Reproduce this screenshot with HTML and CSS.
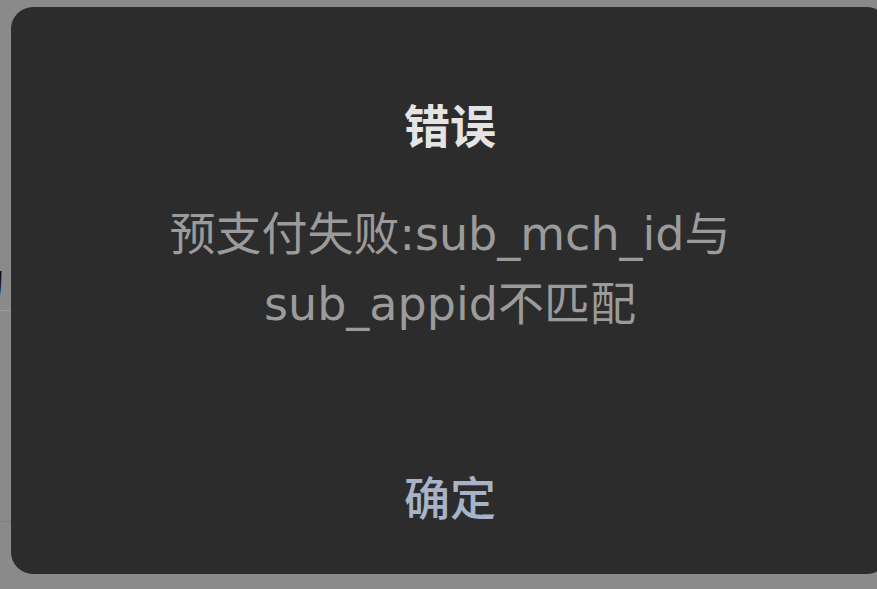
FILE: index.html
```html
<!DOCTYPE html>
<html lang="zh-CN">
<head>
  <meta charset="UTF-8">
  <title>错误</title>
  <link rel="stylesheet" href="styles.css">
</head>
<body>

  <!-- page behind the dialog, dimmed -->
  <div class="page">
    <div class="row row-top">
      <span class="row-label">的</span>
    </div>
    <div class="row row-tall"></div>
  </div>

  <!-- error dialog -->
  <div class="dialog">
    <div class="dialog-title">错误</div>
    <div class="dialog-msg">预支付失败:sub_mch_id与<br>sub_appid不匹配</div>
    <div class="dialog-btn">确定</div>
  </div>

</body>
</html>
```

FILE: styles.css
```css
body {
  margin: 0;
  height: 100vh;
  overflow: hidden;
  background-color: #8a8a8a;
  font-family: "Noto Sans CJK SC", sans-serif;
}

.page {
  padding-top: 250px;
}

.row {
  display: flex;
  align-items: center;
}

.row-top {
  height: 60px;
  border-bottom: 1px solid #9c9c9c;
}

.row-tall {
  height: 210px;
  border-bottom: 1px solid #7e7e7e;
}

.row-label {
  margin-left: -32px;
  font-size: 36px;
  color: #111;
}

.dialog {
  position: fixed;
  left: 11px;
  top: 7px;
  width: 878px;
  height: 567px;
  box-sizing: border-box;
  padding: 86px 0 49px;
  border-radius: 22px;
  background-color: #2c2c2c;
  display: flex;
  flex-direction: column;
  align-items: center;
  text-align: center;
}

.dialog-title {
  font-size: 46px;
  font-weight: 700;
  line-height: 60px;
  color: #e4e4e4;
}

.dialog-msg {
  margin-top: 46px;
  font-family: "DejaVu Sans", "Noto Sans CJK SC", sans-serif;
  font-size: 46px;
  line-height: 70px;
  color: #9b9b9b;
}

.dialog-btn {
  margin-top: auto;
  font-size: 46px;
  font-weight: 500;
  line-height: 60px;
  color: #a7b3c6;
}
```
